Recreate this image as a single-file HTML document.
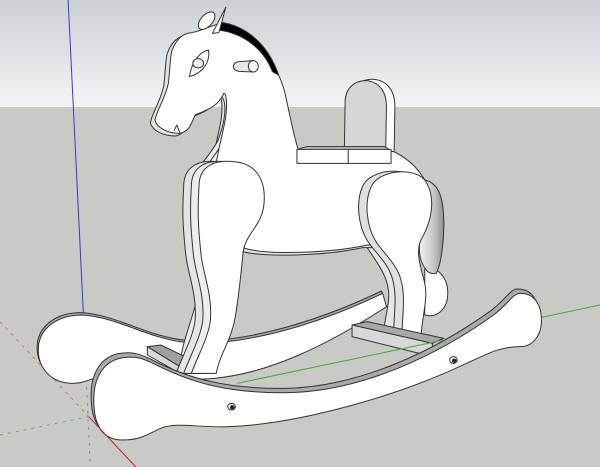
<!DOCTYPE html>
<html><head><meta charset="utf-8"><style>
html,body{margin:0;padding:0;width:600px;height:467px;overflow:hidden;background:#c9c9c5}
svg{display:block}
</style></head><body>
<svg width="600" height="467" viewBox="0 0 1568 1401" preserveAspectRatio="none">
<defs>
<linearGradient id="sky" x1="0" y1="0" x2="0" y2="1">
<stop offset="0" stop-color="#cbd0d4"/><stop offset="1" stop-color="#f3f4f5"/>
</linearGradient>
<linearGradient id="tail" x1="0" y1="0" x2="1" y2="0">
<stop offset="0" stop-color="#f2f2f2"/><stop offset="0.6" stop-color="#c4c4c4"/><stop offset="1" stop-color="#8e8e8e"/>
</linearGradient>
</defs>
<g stroke="#333" stroke-width="1" vector-effect="non-scaling-stroke" stroke-linejoin="round">
<rect x="0" y="0" width="1568" height="321" fill="url(#sky)" stroke="none"/>
<rect x="0" y="321" width="1568" height="1080" fill="#c9c9c5" stroke="none"/>

<line x1="178" y1="0" x2="218" y2="945" stroke="#3a3ad8" vector-effect="non-scaling-stroke"/>
<line x1="218" y1="945" x2="236" y2="1401" stroke="#8888cc" stroke-dasharray="3,5" vector-effect="non-scaling-stroke"/>
<line x1="0" y1="965" x2="232" y2="1250" stroke="#d07070" stroke-dasharray="3,5" vector-effect="non-scaling-stroke"/>
<line x1="0" y1="1305" x2="232" y2="1250" stroke="#60b060" stroke-dasharray="3,5" vector-effect="non-scaling-stroke"/>
<line x1="1568" y1="915" x2="1415" y2="952" stroke="#3cb03c" vector-effect="non-scaling-stroke"/>

<!-- back rocker -->
<path vector-effect="non-scaling-stroke" fill="#a9a9a9" transform="translate(-3,-7)" d="M215,945 C300,950 380,1010 470,1025 C600,1045 800,990 1000,880 L1010,920 C850,1040 700,1120 560,1135 C420,1150 330,1110 260,1130 C230,1140 215,1150 190,1150 C130,1150 100,1100 100,1050 C100,985 150,945 215,945 Z"/>
<path vector-effect="non-scaling-stroke" fill="#fff" d="M215,945 C300,950 380,1010 470,1025 C600,1045 800,990 1000,880 L1010,920 C850,1040 700,1120 560,1135 C420,1150 330,1110 260,1130 C230,1140 215,1150 190,1150 C130,1150 100,1100 100,1050 C100,985 150,945 215,945 Z"/>

<path vector-effect="non-scaling-stroke" fill="#e6e6e6" d="M955,735 C980,780 1010,820 1015,870 C1020,920 1000,960 1005,1010 L1050,1010 C1045,960 1065,910 1060,860 C1055,800 1020,770 1000,735 Z"/>
<path vector-effect="non-scaling-stroke" fill="#fff" d="M1110,805 C1150,800 1172,840 1170,885 C1168,930 1140,955 1110,945 Z"/>

<path vector-effect="non-scaling-stroke" fill="#e2e2e2" transform="translate(-12,8)" d="M490,100 C530,95 560,70 580,70 C650,90 720,170 745,280 C760,360 770,420 780,450 L1020,450 C1060,470 1090,500 1110,540 L1100,720 C1060,735 1000,735 960,735 C860,760 700,765 640,745 L600,700 L560,560 C560,480 580,420 590,350 C595,300 590,280 585,280 C570,320 540,330 510,345 C500,370 495,395 470,400 C440,400 410,385 405,360 C410,330 430,300 440,250 C445,200 445,160 450,150 C460,120 475,105 490,100 Z"/>
<path vector-effect="non-scaling-stroke" fill="#ececec" d="M575,285 C595,300 590,360 570,420 C545,480 490,520 480,600 C470,680 520,760 520,840 C520,920 480,1000 470,1090 L500,1100 C520,1000 545,920 545,840 C545,760 500,680 505,600 C510,520 575,470 598,400 C610,350 605,300 590,275 Z"/>
<path vector-effect="non-scaling-stroke" fill="#f4f4f4" d="M590,280 C608,310 605,370 585,420 C560,480 510,520 505,600 C500,680 545,760 548,840 C550,920 520,1000 505,1100 L530,1110 C545,1000 570,920 570,840 C570,760 525,680 528,600 C535,520 590,470 610,410 C620,350 615,300 600,278 Z"/>

<path vector-effect="non-scaling-stroke" fill="#fff" d="M490,100 C530,95 560,70 580,70 C650,90 720,170 745,280 C760,360 770,420 780,450 L1020,450 C1060,470 1090,500 1110,540 L1100,720 C1060,735 1000,735 960,735 C860,760 700,765 640,745 L600,700 L560,560 C560,480 580,420 590,350 C595,300 590,280 585,280 C570,320 540,330 510,345 C500,370 495,395 470,400 C440,400 410,385 405,360 C410,330 430,300 440,250 C445,200 445,160 450,150 C460,120 475,105 490,100 Z"/>
<path vector-effect="non-scaling-stroke" fill="none" d="M470,398 L462,375 L455,392"/>

<path vector-effect="non-scaling-stroke" fill="#000" d="M572,66 C640,75 700,130 728,225 L712,215 C690,150 640,100 570,90 Z"/>
<ellipse vector-effect="non-scaling-stroke" cx="540" cy="62" rx="16" ry="30" transform="rotate(35 540 62)" fill="#fff"/>
<path vector-effect="non-scaling-stroke" fill="#fff" d="M555,100 L590,22 L572,98 Z"/>
<path vector-effect="non-scaling-stroke" fill="#fff" d="M495,230 C500,190 520,155 545,150 C550,185 530,220 495,230 Z"/>
<circle vector-effect="non-scaling-stroke" cx="518" cy="190" r="14" fill="#f0f0f0"/>
<path vector-effect="non-scaling-stroke" fill="#e8e8e8" d="M625,185 L662,182 L662,216 L625,214 C605,212 605,187 625,185 Z"/>
<ellipse vector-effect="non-scaling-stroke" cx="662" cy="199" rx="13" ry="17" fill="#fff"/>

<path vector-effect="non-scaling-stroke" fill="#fff" d="M915,445 L915,300 C915,250 955,237 975,238 C1010,240 1032,270 1032,320 L1030,455 Z"/>
<path vector-effect="non-scaling-stroke" fill="#d6d6d6" d="M900,445 L902,300 C905,260 930,240 960,242 C995,248 1010,280 1010,320 L1008,445 Z"/>
<path vector-effect="non-scaling-stroke" fill="#bdbdbd" d="M778,448 L800,440 L1005,440 L1020,450 Z"/>
<rect vector-effect="non-scaling-stroke" x="776" y="448" width="246" height="42" fill="#fff"/>
<line vector-effect="non-scaling-stroke" x1="910" y1="448" x2="910" y2="490"/>

<path vector-effect="non-scaling-stroke" fill="url(#tail)" d="M1110,540 C1150,550 1160,600 1160,680 C1158,750 1150,800 1140,820 C1120,825 1110,810 1100,780 C1090,740 1100,700 1110,660 Z"/>

<path vector-effect="non-scaling-stroke" fill="#e0e0e0" transform="translate(-22,-2)" d="M970,560 C990,510 1080,500 1110,540 C1140,590 1130,660 1100,720 C1085,760 1100,800 1110,850 C1120,900 1100,960 1100,1020 L1050,1020 C1050,960 1060,900 1050,850 C1040,790 1000,760 980,720 C960,680 950,610 970,560 Z"/>
<path vector-effect="non-scaling-stroke" fill="#fff" d="M970,560 C990,510 1080,500 1110,540 C1140,590 1130,660 1100,720 C1085,760 1100,800 1110,850 C1120,900 1100,960 1100,1020 L1050,1020 C1050,960 1060,900 1050,850 C1040,790 1000,760 980,720 C960,680 950,610 970,560 Z"/>

<path vector-effect="non-scaling-stroke" fill="#a8a8a8" d="M920,975 L960,965 L1160,1015 L1130,1030 Z"/>
<path vector-effect="non-scaling-stroke" fill="#d8d8d8" d="M920,975 L1130,1030 L1130,1070 L920,1010 Z"/>

<path vector-effect="non-scaling-stroke" fill="#a0a0a0" d="M385,1040 L420,1035 L520,1090 L470,1100 Z"/>
<path vector-effect="non-scaling-stroke" fill="#d8d8d8" d="M385,1040 L470,1100 L470,1120 L385,1065 Z"/>

<path vector-effect="non-scaling-stroke" fill="#e4e4e4" transform="translate(-40,0)" d="M520,560 C520,490 570,480 610,485 C670,490 695,540 690,610 C685,680 640,700 635,760 C630,820 625,880 615,950 C605,1020 575,1060 565,1120 L500,1120 C520,1060 545,1010 550,960 C555,880 530,820 525,760 C520,700 515,650 520,560 Z"/>
<path vector-effect="non-scaling-stroke" fill="#ededed" transform="translate(-20,0)" d="M520,560 C520,490 570,480 610,485 C670,490 695,540 690,610 C685,680 640,700 635,760 C630,820 625,880 615,950 C605,1020 575,1060 565,1120 L500,1120 C520,1060 545,1010 550,960 C555,880 530,820 525,760 C520,700 515,650 520,560 Z"/>
<path vector-effect="non-scaling-stroke" fill="#fff" d="M520,560 C520,490 570,480 610,485 C670,490 695,540 690,610 C685,680 640,700 635,760 C630,820 625,880 615,950 C605,1020 575,1060 565,1120 L500,1120 C520,1060 545,1010 550,960 C555,880 530,820 525,760 C520,700 515,650 520,560 Z"/>

<!-- front rocker -->
<path vector-effect="non-scaling-stroke" fill="#a9a9a9" transform="translate(-7,-13)" d="M330,1072 C360,1068 380,1080 400,1090 C500,1150 600,1180 750,1178 C950,1175 1150,1060 1290,945 C1330,910 1340,880 1360,880 C1400,880 1415,920 1415,960 C1415,1010 1390,1040 1360,1040 C1300,1040 1270,1065 1200,1100 C1050,1180 800,1270 600,1280 C520,1284 460,1265 420,1285 C390,1300 370,1320 320,1320 C270,1320 245,1280 245,1200 C245,1120 280,1075 330,1072 Z"/>
<path vector-effect="non-scaling-stroke" fill="#fff" d="M330,1072 C360,1068 380,1080 400,1090 C500,1150 600,1180 750,1178 C950,1175 1150,1060 1290,945 C1330,910 1340,880 1360,880 C1400,880 1415,920 1415,960 C1415,1010 1390,1040 1360,1040 C1300,1040 1270,1065 1200,1100 C1050,1180 800,1270 600,1280 C520,1284 460,1265 420,1285 C390,1300 370,1320 320,1320 C270,1320 245,1280 245,1200 C245,1120 280,1075 330,1072 Z"/>
<line x1="1160" y1="1020" x2="620" y2="1150" stroke="#3cb03c" vector-effect="non-scaling-stroke"/>
<line x1="232" y1="1250" x2="355" y2="1401" stroke="#cc2020" vector-effect="non-scaling-stroke"/>
<circle vector-effect="non-scaling-stroke" cx="605" cy="1220" r="10" fill="#fff"/>
<circle vector-effect="non-scaling-stroke" cx="607" cy="1222" r="5" fill="#222"/>
<circle vector-effect="non-scaling-stroke" cx="1185" cy="1080" r="10" fill="#fff"/>
<circle vector-effect="non-scaling-stroke" cx="1187" cy="1082" r="5" fill="#222"/>
</g>
</svg>
</body></html>
